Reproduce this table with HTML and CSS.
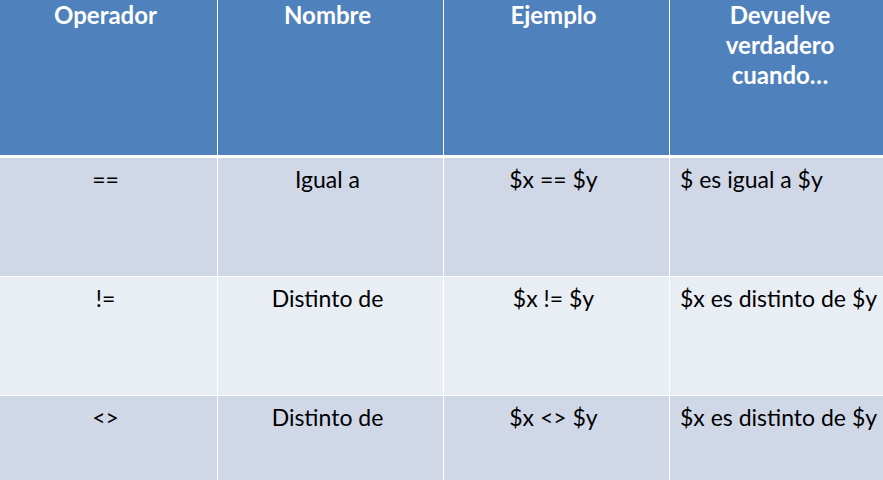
FILE: index.html
```html
<!DOCTYPE html>
<html lang="es">
<head>
<meta charset="utf-8">
<title>Operadores de comparación</title>
<link rel="stylesheet" href="styles.css">
</head>
<body>
<div class="table">
  <div class="cell head">Operador</div>
  <div class="cell head">Nombre</div>
  <div class="cell head">Ejemplo</div>
  <div class="cell head">Devuelve<br>verdadero<br>cuando…</div>

  <div class="cell odd">==</div>
  <div class="cell odd">Igual a</div>
  <div class="cell odd">$x == $y</div>
  <div class="cell odd left">$ es igual a $y</div>

  <div class="cell even">!=</div>
  <div class="cell even">Distinto de</div>
  <div class="cell even">$x != $y</div>
  <div class="cell even left">$x es distinto de $y</div>

  <div class="cell odd">&lt;&gt;</div>
  <div class="cell odd">Distinto de</div>
  <div class="cell odd">$x &lt;&gt; $y</div>
  <div class="cell odd left">$x es distinto de $y</div>
</div>
</body>
</html>
```
FILE: styles.css
```css
html, body {
  margin: 0;
  padding: 0;
  background: #ffffff;
  overflow: hidden;
}
body {
  width: 883px;
  height: 480px;
  font-family: Lato, "Open Sans", sans-serif;
  color: #000000;
}
.table {
  display: grid;
  grid-template-columns: 217px 225px 225px 226px;
  grid-template-rows: 157px 118px 118px 84px;
  column-gap: 1px;
  row-gap: 1px;
  background: #ffffff;
}
.cell {
  font-size: 23px;
  line-height: 30px;
  text-align: center;
  padding: 6px 6px 0 0;
}
.head {
  background: #4f81bd;
  color: #ffffff;
  font-size: 24px;
  font-weight: 700;
  padding-top: 0;
  margin-bottom: 2px;
}
.odd {
  background: #d0d8e8;
}
.even {
  background: #e9edf4;
}
.left {
  text-align: left;
  padding-left: 10px;
}
```
